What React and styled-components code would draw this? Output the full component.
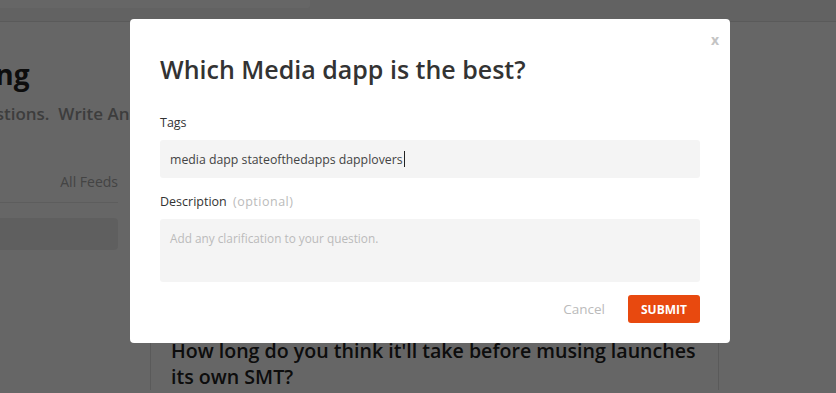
import React from "react";
import styled, { createGlobalStyle } from "styled-components";

const GlobalStyle = createGlobalStyle`
  html, body {
    margin: 0;
    padding: 0;
    background: #fff;
    font-family: "Open Sans", "Liberation Sans", sans-serif;
  }
  * {
    box-sizing: border-box;
  }
`;

const App = () => {
  return (
    <>
      <GlobalStyle />
      <Page>
        <Header>
          <SearchBox />
        </Header>
        <Hero>
          <HeroTitle>Musing</HeroTitle>
          <HeroText>Ask Questions.&nbsp; Write Answers. Earn Rewards.</HeroText>
        </Hero>
        <Content>
          <Sidebar>
            <Tabs>
              <Tab>All Feeds</Tab>
            </Tabs>
            <SideBox />
          </Sidebar>
          <Main>
            <Card>
              <CardMeta />
              <Question>
                How long do you think it'll take before musing launches its own
                SMT?
              </Question>
            </Card>
          </Main>
        </Content>
      </Page>

      <Overlay>
        <Modal>
          <CloseBtn>x</CloseBtn>
          <Title>Which Media dapp is the best?</Title>
          <Field>
            <Label>Tags</Label>
            <InputBox>
              media dapp stateofthedapps dapplovers
              <Caret />
            </InputBox>
          </Field>
          <Field $last>
            <Label>
              Description <Muted>(optional)</Muted>
            </Label>
            <TextBox>Add any clarification to your question.</TextBox>
          </Field>
          <Footer>
            <CancelBtn>Cancel</CancelBtn>
            <SubmitBtn>SUBMIT</SubmitBtn>
          </Footer>
        </Modal>
      </Overlay>
    </>
  );
};

export default App;

const Page = styled.div`
  height: 100vh;
  overflow: hidden;
  background: #fff;
`;

const Header = styled.header`
  height: 22px;
  background: #f4f4f4;
  border-bottom: 1px solid #e0e0e0;
  display: flex;
  align-items: flex-start;
`;

const SearchBox = styled.div`
  width: 310px;
  height: 8px;
  background: #fff;
  border-radius: 0 0 3px 0;
`;

const Hero = styled.section`
  margin-left: -72px;
  padding-top: 30px;
  height: 138px;
`;

const HeroTitle = styled.h1`
  margin: 0;
  font-size: 28px;
  line-height: 44px;
  font-weight: 700;
  color: #222;
`;

const HeroText = styled.p`
  margin: 6px 0 0;
  font-size: 17px;
  font-weight: 600;
  color: #999;
`;

const Content = styled.div`
  display: flex;
  gap: 32px;
  margin-left: -132px;
`;

const Sidebar = styled.aside`
  width: 250px;
  flex-shrink: 0;
`;

const Tabs = styled.div`
  display: flex;
  justify-content: flex-end;
  height: 43px;
  align-items: center;
  border-bottom: 1px solid #e8e8e8;
`;

const Tab = styled.span`
  font-size: 14px;
  color: #aaa;
`;

const SideBox = styled.div`
  margin-top: 15px;
  height: 32px;
  background: #eee;
  border-radius: 4px;
`;

const Main = styled.main`
  width: 569px;
`;

const Card = styled.div`
  border-left: 1px solid #e0e0e0;
  border-right: 1px solid #e0e0e0;
  padding: 0 20px;
  background: #fff;
`;

const CardMeta = styled.div`
  height: 178px;
`;

const Question = styled.h2`
  margin: 0;
  font-size: 19.6px;
  line-height: 26px;
  font-weight: 600;
  color: #222;
`;

const Overlay = styled.div`
  position: fixed;
  inset: 0;
  background: rgba(0, 0, 0, 0.6);
  display: flex;
  justify-content: center;
  align-items: flex-start;
  padding: 19px 0 0 24px;
`;

const Modal = styled.div`
  position: relative;
  width: 600px;
  background: #fff;
  border-radius: 4px;
  padding: 30px 30px 20px;
`;

const CloseBtn = styled.span`
  position: absolute;
  top: 11px;
  right: 11px;
  font-size: 14px;
  font-weight: 700;
  color: #c4c4c4;
`;

const Title = styled.h2`
  margin: 0 0 25px;
  font-size: 25px;
  line-height: 40px;
  font-weight: 600;
  color: #333;
`;

const Field = styled.div`
  display: flex;
  flex-direction: column;
  gap: 8px;
  margin-bottom: ${(p) => (p.$last ? "13px" : "15px")};
`;

const Label = styled.label`
  font-size: 12.5px;
  line-height: 18px;
  color: #333;
`;

const Muted = styled.span`
  color: #bbb;
  margin-left: 3px;
  letter-spacing: 0.5px;
`;

const InputBox = styled.div`
  height: 38px;
  background: #f4f4f4;
  border-radius: 3px;
  padding: 0 10px;
  display: flex;
  align-items: center;
  font-size: 12.3px;
  color: #444;
`;

const Caret = styled.span`
  display: inline-block;
  width: 1px;
  height: 16px;
  background: #222;
  margin-left: 1px;
`;

const TextBox = styled.div`
  height: 63px;
  background: #f4f4f4;
  border-radius: 3px;
  padding: 11px 10px;
  font-size: 11.8px;
  color: #bbb;
`;

const Footer = styled.div`
  display: flex;
  justify-content: flex-end;
  align-items: center;
  gap: 23px;
`;

const CancelBtn = styled.span`
  font-size: 13.5px;
  color: #bbb;
`;

const SubmitBtn = styled.button`
  height: 28px;
  width: 72px;
  border: none;
  border-radius: 3px;
  background: #e8490f;
  color: #fff;
  font-family: inherit;
  font-size: 12px;
  font-weight: 700;
`;
